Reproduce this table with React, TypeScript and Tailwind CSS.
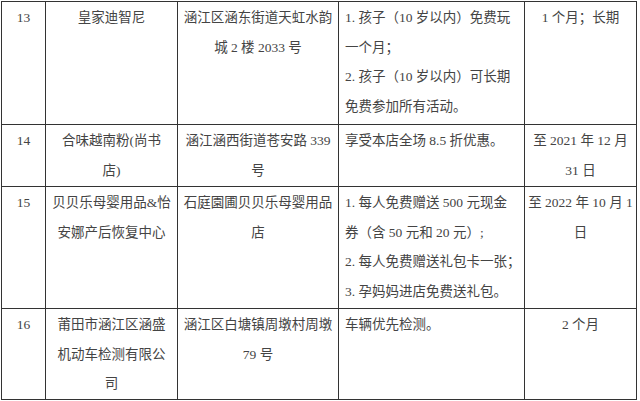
import React from "react";

type Row = {
  no: string;
  name: string[];
  addr: string[];
  offer: string[];
  period: string[];
  h: string;
};

const rows: Row[] = [
  {
    no: "13",
    name: ["皇家迪智尼"],
    addr: ["涵江区涵东街道天虹水韵", "城 2 楼 2033 号"],
    offer: [
      "1. 孩子（10 岁以内）免费玩",
      "一个月；",
      "2. 孩子（10 岁以内）可长期",
      "免费参加所有活动。",
    ],
    period: ["1 个月；长期"],
    h: "h-[123px]",
  },
  {
    no: "14",
    name: ["合味越南粉(尚书", "店)"],
    addr: ["涵江涵西街道苍安路 339", "号"],
    offer: ["享受本店全场 8.5 折优惠。"],
    period: ["至 2021 年 12 月", "31 日"],
    h: "h-[62px]",
  },
  {
    no: "15",
    name: ["贝贝乐母婴用品&怡", "安娜产后恢复中心"],
    addr: ["石庭園圃贝贝乐母婴用品", "店"],
    offer: [
      "1. 每人免费赠送 500 元现金",
      "券（含 50 元和 20 元）;",
      "2. 每人免费赠送礼包卡一张；",
      "3. 孕妈妈进店免费送礼包。",
    ],
    period: ["至 2022 年 10 月 1", "日"],
    h: "h-[122px]",
  },
  {
    no: "16",
    name: ["莆田市涵江区涵盛", "机动车检测有限公", "司"],
    addr: ["涵江区白塘镇周墩村周墩", "79 号"],
    offer: ["车辆优先检测。"],
    period: ["2 个月"],
    h: "h-[89px]",
  },
];

function Lines({ lines }: { lines: string[] }) {
  return (
    <>
      {lines.map((l, i) => (
        <div key={i} className="whitespace-nowrap">
          {l}
        </div>
      ))}
    </>
  );
}

export default function App() {
  return (
    <div className="w-[640px] h-[401px] bg-white pl-px pt-px overflow-hidden">
      {/* Shop offers table */}
      <table
        className="table-fixed w-[635px] border-collapse border border-[#555] text-[13.5px] leading-[29.5px] text-[#444]"
        style={{ fontFamily: '"Liberation Serif", "Noto Sans CJK SC", serif' }}
      >
        <colgroup>
          <col className="w-[44px]" />
          <col className="w-[132px]" />
          <col className="w-[161px]" />
          <col className="w-[186px]" />
          <col className="w-[112px]" />
        </colgroup>
        <tbody>
          {rows.map((r) => (
            <tr key={r.no} className={r.h}>
              <td className="border border-[#333] align-top text-center p-0 pt-[1px]">{r.no}</td>
              <td className="border border-[#333] align-top text-center p-0 pt-[1px] overflow-hidden">
                <Lines lines={r.name} />
              </td>
              <td className="border border-[#333] align-top text-center p-0 pt-[1px] overflow-hidden">
                <Lines lines={r.addr} />
              </td>
              <td className="border border-[#333] align-top text-left px-[6px] pb-0 pt-[1px] overflow-hidden">
                <Lines lines={r.offer} />
              </td>
              <td className="border border-[#333] align-top text-center p-0 pt-[1px] overflow-hidden">
                <Lines lines={r.period} />
              </td>
            </tr>
          ))}
        </tbody>
      </table>
    </div>
  );
}
